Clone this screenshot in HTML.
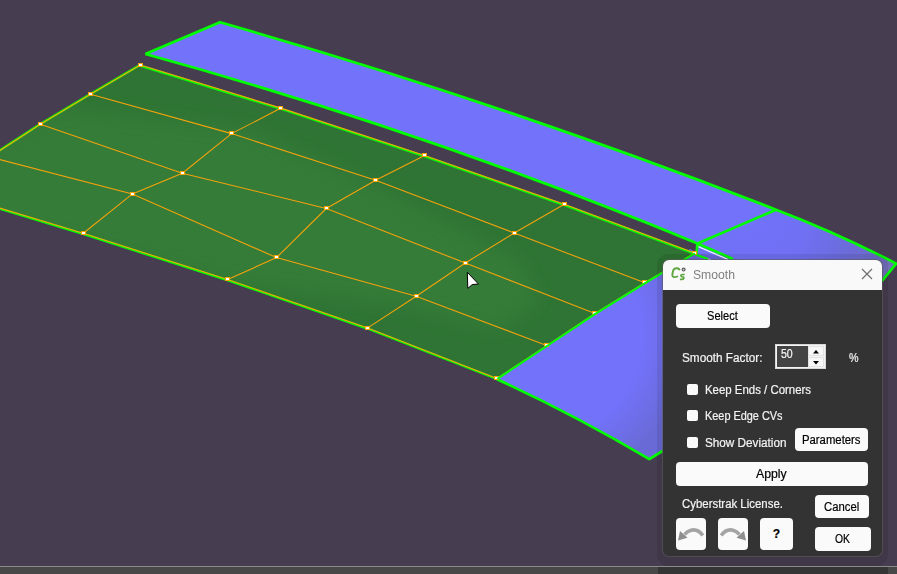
<!DOCTYPE html>
<html><head><meta charset="utf-8">
<style>
html,body{margin:0;padding:0;}
body{width:897px;height:574px;overflow:hidden;position:relative;background:#463d50;font-family:"Liberation Sans",sans-serif;}
#scene{position:absolute;left:0;top:0;}
.bar{position:absolute;left:0;top:566px;width:897px;height:8px;background:#484848;border-top:1px solid #8a8a8a;box-sizing:border-box;}
.dlg{position:absolute;left:663px;top:260px;width:219px;height:296px;background:#333333;border-radius:6px;box-shadow:0 0 0 1px rgba(90,90,90,0.6);}
.shadow{position:absolute;left:657px;top:254px;width:231px;height:312px;border-radius:11px;background:rgba(0,0,0,0.08);}
.barshadow{position:absolute;left:658px;top:567px;width:230px;height:7px;background:#353535;}
.ttlbar{position:absolute;left:663px;top:260px;width:219px;height:30px;background:#f9f9f9;border-radius:6px 6px 0 0;}
.t{position:absolute;font-size:12px;line-height:14px;white-space:nowrap;transform-origin:0 0;-webkit-text-stroke:0.2px currentColor;}
.btn{position:absolute;background:#fafafa;border-radius:4px;}
.cb{position:absolute;left:687px;width:11px;height:11px;background:#fafafa;border-radius:2px;}
.spin{position:absolute;left:775px;top:344px;width:51px;height:25px;background:#f4f4f4;box-shadow:inset 0 0 0 1px #d8d8d8;}
.field{position:absolute;left:777px;top:346px;width:31px;height:21px;background:#444;}
.sb{position:absolute;left:808px;width:16px;height:10px;background:#f7f7f7;box-shadow:inset 0 0 0 1px #e2e2e2;}
.sb svg{display:block}
</style></head><body>
<svg id="scene" width="897" height="574" viewBox="0 0 897 574">
  <defs>
    <radialGradient id="rshade" gradientUnits="userSpaceOnUse" cx="745" cy="215" r="175">
      <stop offset="0" stop-color="#7272fb"/>
      <stop offset="0.35" stop-color="#7070f4"/>
      <stop offset="0.6" stop-color="#6c6cdc"/>
      <stop offset="0.78" stop-color="#6e6cc8"/>
      <stop offset="0.9" stop-color="#7470b4"/>
      <stop offset="1" stop-color="#7874a8"/>
    </radialGradient>
    <radialGradient id="lshade" gradientUnits="userSpaceOnUse" cx="540" cy="335" r="150">
      <stop offset="0" stop-color="#7272fb"/>
      <stop offset="0.68" stop-color="#7272fb"/>
      <stop offset="0.85" stop-color="#6e6ee8"/>
      <stop offset="1" stop-color="#6a6ad6"/>
    </radialGradient>
    <linearGradient id="gshade" gradientUnits="userSpaceOnUse" x1="200" y1="120" x2="330" y2="330">
      <stop offset="0" stop-color="#2e7233"/>
      <stop offset="0.35" stop-color="#327a37"/>
      <stop offset="0.7" stop-color="#317836"/>
      <stop offset="1" stop-color="#2f7434"/>
    </linearGradient>
    <filter id="blur8" x="-20%" y="-20%" width="140%" height="140%"><feGaussianBlur stdDeviation="9"/></filter>
  </defs>
  <path d="M145.4,54.0 L220.0,22.3 Q498.0,101.3 776.0,209.7 L697.5,243.4 Q421.4,129.6 145.4,54.0 Z" fill="#7272fb"/>
  <path d="M776.0,209.7 Q836.1,232.5 896.2,263.6 L882,281 L882,300 L697.5,300 L697.5,243.4 Z" fill="url(#rshade)"/>
  <path d="M690,249 L697.5,253 L882,281 L882,300 L700,420 L662.5,451 L649.3,459.2 Q573.2,414.1 497,379.3 L488,372 Z" fill="url(#lshade)"/>
  <clipPath id="gclip"><polygon points="140.4,65 281,108.1 424.6,155.4 564.3,204.3 694.6,253 644.8,282.8 595,313.4 546.7,345.6 497,378.4 367.7,327.9 227.7,279.5 83.3,233.3 -60,190 -10,157 40.4,124.2 90.6,94.3"/></clipPath>
  <polygon points="140.4,65 281,108.1 424.6,155.4 564.3,204.3 694.6,253 644.8,282.8 595,313.4 546.7,345.6 497,378.4 367.7,327.9 227.7,279.5 83.3,233.3 -60,190 -10,157 40.4,124.2 90.6,94.3" fill="#2f7434"/>
  <g clip-path="url(#gclip)">
    <path d="M-20,150 L60,108 L250,130 L400,198 L520,262 L540,300 L500,330 L400,305 L240,285 L90,245 L-20,225 Z" fill="#347c39" filter="url(#blur8)"/>
  </g>
  <g fill="none" stroke="#ffffff" stroke-width="1.2">
    <path d="M698,246.5 L728,259.5"/>
    <path d="M698,255.5 L711,260"/>
  </g>
  <g fill="none" stroke="#00ff00" stroke-width="2.7" stroke-linejoin="round">
    <path d="M145.4,54.0 L220.0,22.3 Q498.0,101.3 776.0,209.7 Q836.1,232.5 896.2,263.6 L882,281"/>
    <path d="M145.4,54.0 Q421.4,129.6 697.5,243.4 L733,259"/>
    <path d="M776.0,209.7 L697.5,243.4 L696.5,253.7"/>
    <path d="M497,379.3 Q573.2,414.1 649.3,459.2 L662.5,451"/>
  </g>
  <g fill="none" stroke="#00ff00" stroke-width="2.3">
    <polyline points="140.4,65 281,108.1 424.6,155.4 564.3,204.3 694.6,253" transform="translate(0.4,0.9)"/>
    <polyline points="-60,190 83.3,233.3 227.7,279.5 367.7,327.9 497,378.4" transform="translate(0.4,0.9)"/>
    <polyline points="140.4,65 90.6,94.3 40.4,124.2 -10,157 -60,190" transform="translate(-0.5,0)"/>
    <path d="M695.7,254.6 L708,259"/>
  </g>
  <g fill="none" stroke="#f2a20c" stroke-width="1.1">
    <polyline points="140.4,65 281,108.1 424.6,155.4 564.3,204.3 694.6,253"/>
<polyline points="90.6,94.3 231.6,133.6 375.6,180.3 514.2,233 644.8,282.8"/>
<polyline points="40.4,124.2 182.3,173.2 326.3,208.5 465.3,263 595,313.4"/>
<polyline points="-10,157 132.4,193.9 276.5,257.6 416.2,296.2 546.7,345.6"/>
<polyline points="-60,190 83.3,233.3 227.7,279.5 367.7,327.9 497,378.4"/>
<polyline points="140.4,65 90.6,94.3 40.4,124.2 -10,157 -60,190"/>
<polyline points="281,108.1 231.6,133.6 182.3,173.2 132.4,193.9 83.3,233.3"/>
<polyline points="424.6,155.4 375.6,180.3 326.3,208.5 276.5,257.6 227.7,279.5"/>
<polyline points="564.3,204.3 514.2,233 465.3,263 416.2,296.2 367.7,327.9"/>
<polyline points="694.6,253 644.8,282.8 595,313.4 546.7,345.6 497,378.4"/>
  </g>
  <rect x="138" y="63" width="5" height="4" fill="#f5a400"/><rect x="139" y="64" width="3" height="2" fill="#fff"/>
<rect x="278" y="106" width="5" height="4" fill="#f5a400"/><rect x="279" y="107" width="3" height="2" fill="#fff"/>
<rect x="422" y="153" width="5" height="4" fill="#f5a400"/><rect x="423" y="154" width="3" height="2" fill="#fff"/>
<rect x="562" y="202" width="5" height="4" fill="#f5a400"/><rect x="563" y="203" width="3" height="2" fill="#fff"/>
<rect x="692" y="251" width="5" height="4" fill="#f5a400"/><rect x="693" y="252" width="3" height="2" fill="#fff"/>
<rect x="88" y="92" width="5" height="4" fill="#f5a400"/><rect x="89" y="93" width="3" height="2" fill="#fff"/>
<rect x="229" y="131" width="5" height="4" fill="#f5a400"/><rect x="230" y="132" width="3" height="2" fill="#fff"/>
<rect x="373" y="178" width="5" height="4" fill="#f5a400"/><rect x="374" y="179" width="3" height="2" fill="#fff"/>
<rect x="512" y="231" width="5" height="4" fill="#f5a400"/><rect x="513" y="232" width="3" height="2" fill="#fff"/>
<rect x="642" y="280" width="5" height="4" fill="#f5a400"/><rect x="643" y="281" width="3" height="2" fill="#fff"/>
<rect x="38" y="122" width="5" height="4" fill="#f5a400"/><rect x="39" y="123" width="3" height="2" fill="#fff"/>
<rect x="180" y="171" width="5" height="4" fill="#f5a400"/><rect x="181" y="172" width="3" height="2" fill="#fff"/>
<rect x="324" y="206" width="5" height="4" fill="#f5a400"/><rect x="325" y="207" width="3" height="2" fill="#fff"/>
<rect x="463" y="261" width="5" height="4" fill="#f5a400"/><rect x="464" y="262" width="3" height="2" fill="#fff"/>
<rect x="592" y="311" width="5" height="4" fill="#f5a400"/><rect x="593" y="312" width="3" height="2" fill="#fff"/>
<rect x="130" y="192" width="5" height="4" fill="#f5a400"/><rect x="131" y="193" width="3" height="2" fill="#fff"/>
<rect x="274" y="255" width="5" height="4" fill="#f5a400"/><rect x="275" y="256" width="3" height="2" fill="#fff"/>
<rect x="414" y="294" width="5" height="4" fill="#f5a400"/><rect x="415" y="295" width="3" height="2" fill="#fff"/>
<rect x="544" y="343" width="5" height="4" fill="#f5a400"/><rect x="545" y="344" width="3" height="2" fill="#fff"/>
<rect x="81" y="231" width="5" height="4" fill="#f5a400"/><rect x="82" y="232" width="3" height="2" fill="#fff"/>
<rect x="225" y="277" width="5" height="4" fill="#f5a400"/><rect x="226" y="278" width="3" height="2" fill="#fff"/>
<rect x="365" y="326" width="5" height="4" fill="#f5a400"/><rect x="366" y="327" width="3" height="2" fill="#fff"/>
<rect x="494" y="376" width="5" height="4" fill="#f5a400"/><rect x="495" y="377" width="3" height="2" fill="#fff"/>
  <polyline points="694.6,253 644.8,282.8 595,313.4 546.7,345.6 497,378.4" fill="none" stroke="#00ff00" stroke-width="2.1" stroke-linejoin="round" transform="translate(0.3,0.4)"/>
  <path d="M467.3,272.3 L467.8,288.4 L472.2,284.6 L478.5,284 Z" fill="#fff" stroke="#000" stroke-width="1" stroke-linejoin="round"/>
</svg>
<div class="bar"></div>

<div class="shadow"></div>
<div class="barshadow"></div>
<div class="dlg"></div>
<div class="ttlbar"></div>
<svg width="30" height="29" style="position:absolute;left:663px;top:260px">
  <path d="M16.4,9.4 C15.8,8.6 14.6,8.3 13.3,8.3 C11,8.3 10.3,9.7 9.9,11.5 L9.4,14.2 C9.1,16.2 9.9,17.1 11.6,17.1 C12.6,17.1 13.5,16.9 14.3,16.5" stroke="#5ea63e" stroke-width="1.9" fill="none" stroke-linecap="round"/>
  <path d="M21.7,14.5 L19.2,14.5 C18.3,14.5 17.9,15 17.9,15.6 C17.9,16.4 18.5,16.7 19.4,16.8 C20.4,16.9 20.9,17.3 20.8,18.2 C20.7,19 20.1,19.4 19.2,19.4 L16.9,19.4" stroke="#5ea63e" stroke-width="1.7" fill="none"/>
  <circle cx="20.6" cy="9.6" r="2" fill="#606060"/>
  <circle cx="20.6" cy="9.6" r="0.9" fill="#c8c8c8"/>
</svg>
<svg width="14" height="14" style="position:absolute;left:860px;top:267px">
  <path d="M2,2 L12,12 M12,2 L2,12" stroke="#6f6f6f" stroke-width="1.2"/>
</svg>
<div class="btn" style="left:676px;top:304px;width:94px;height:24px;"></div>
<div class="spin"></div>
<div class="field"></div>
<div class="sb" style="top:346px"><svg width="16" height="10"><path d="M5,7.5 L8,4 L11,7.5 Z" fill="#000"/></svg></div>
<div class="sb" style="top:357px"><svg width="16" height="10"><path d="M5,4 L8,7.5 L11,4 Z" fill="#000"/></svg></div>
<div class="cb" style="top:384px;"></div>
<div class="cb" style="top:410px;"></div>
<div class="cb" style="top:437px;"></div>
<div class="btn" style="left:795px;top:428px;width:73px;height:23px;"></div>
<div class="btn" style="left:676px;top:462px;width:192px;height:24px;"></div>
<div class="btn" style="left:815px;top:495px;width:54px;height:23px;"></div>
<div class="btn" style="left:815px;top:527px;width:56px;height:24px;"></div>
<div class="btn" style="left:676px;top:518px;width:30px;height:32px;">
  <svg width="30" height="32" style="position:absolute;left:0;top:0">
    <path d="M26.8,17.6 Q22,10.6 15,12.2 Q11.5,13.2 8.5,16.5" stroke="#a4a4a4" stroke-width="3.6" fill="none"/>
    <path d="M4,13 L2,22.6 L11.5,19.8 Z" fill="#8e8e8e"/>
  </svg>
</div>
<div class="btn" style="left:718px;top:518px;width:30px;height:32px;">
  <svg width="30" height="32" style="position:absolute;left:0;top:0;transform:scaleX(-1)">
    <path d="M26.8,17.6 Q22,10.6 15,12.2 Q11.5,13.2 8.5,16.5" stroke="#a4a4a4" stroke-width="3.6" fill="none"/>
    <path d="M4,13 L2,22.6 L11.5,19.8 Z" fill="#8e8e8e"/>
  </svg>
</div>
<div class="btn" style="left:760px;top:518px;width:33px;height:32px;"></div>
<div class="t" id="ttl" style="left:693.40px;top:268.20px;color:#7f7f7f;font-weight:normal;transform:scaleX(1.0147);-webkit-text-stroke:0;">Smooth</div>
<div class="t" id="sel" style="left:707.20px;top:309.20px;color:#000;font-weight:normal;transform:scaleX(0.9223);">Select</div>
<div class="t" id="sf" style="left:681.80px;top:351.00px;color:#f4f4f4;font-weight:normal;transform:scaleX(0.9803);">Smooth Factor:</div>
<div class="t" id="v50" style="left:781.40px;top:346.80px;color:#f4f4f4;font-weight:normal;transform:scaleX(0.8800);">50</div>
<div class="t" id="pct" style="left:849.40px;top:351.20px;color:#f4f4f4;font-weight:normal;transform:scaleX(0.8937);">%</div>
<div class="t" id="ke" style="left:705.40px;top:382.80px;color:#f4f4f4;font-weight:normal;transform:scaleX(0.9523);">Keep Ends / Corners</div>
<div class="t" id="kcv" style="left:705.00px;top:409.40px;color:#f4f4f4;font-weight:normal;transform:scaleX(0.9082);">Keep Edge CVs</div>
<div class="t" id="sd" style="left:705.00px;top:435.60px;color:#f4f4f4;font-weight:normal;transform:scaleX(0.9771);">Show Deviation</div>
<div class="t" id="par" style="left:802.00px;top:433.40px;color:#000;font-weight:normal;transform:scaleX(0.9436);">Parameters</div>
<div class="t" id="app" style="left:755.80px;top:467.20px;color:#000;font-weight:normal;transform:scaleX(1.0234);">Apply</div>
<div class="t" id="cyb" style="left:681.80px;top:496.80px;color:#f4f4f4;font-weight:normal;transform:scaleX(0.9515);">Cyberstrak License.</div>
<div class="t" id="can" style="left:824.00px;top:499.60px;color:#000;font-weight:normal;transform:scaleX(0.9435);">Cancel</div>
<div class="t" id="ok" style="left:835.00px;top:531.60px;color:#000;font-weight:normal;transform:scaleX(0.8620);">OK</div>
<div class="t" id="q" style="left:772.80px;top:526.60px;color:#000;font-weight:bold;transform:scaleX(1.0000);">?</div>

</body></html>
